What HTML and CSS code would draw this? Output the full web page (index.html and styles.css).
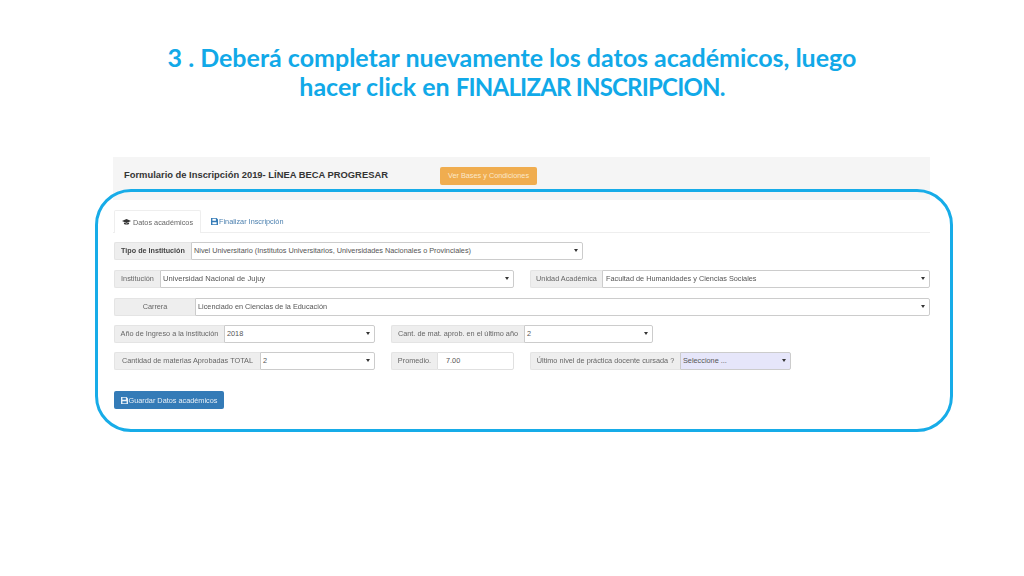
FILE: index.html
```html
<!DOCTYPE html>
<html lang="es">
<head>
<meta charset="utf-8">
<title>Formulario de Inscripción</title>
<link rel="stylesheet" href="styles.css">
</head>
<body>
<main class="slide">
  <h1 class="title">3 . Deberá completar nuevamente los datos académicos, luego<br>hacer click en <span class="caps">FINALIZAR INSCRIPCION.</span></h1>
  <section class="panel">
    <header class="head">
      <h2 class="head-title">Formulario de Inscripción 2019- LÍNEA BECA PROGRESAR</h2>
      <a class="btn-orange">Ver Bases y Condiciones</a>
    </header>
    <nav class="tabs">
      <a class="tab active">
        <svg class="ico" viewBox="0 0 12 10"><path fill="#333" d="M6 1 0 3.6l6 2.6 6-2.6z"/><path fill="#333" d="M2.6 5.6v1.9c1.8 1.2 5 1.2 6.8 0V5.6L6 7.1z"/></svg>Datos académicos
      </a>
      <a class="tab link">
        <svg class="ico save" viewBox="0 0 10 10"><path fill="#337ab7" d="M0 0h8l2 2v8H0zm2 1v3h5V1zm0 5v3h6V6z"/></svg>Finalizar Inscripción
      </a>
    </nav>
    <div class="row r1">
      <div class="group w469"><span class="addon strong w77">Tipo de Institución</span><div class="select"><span>Nivel Universitario (Institutos Universitarios, Universidades Nacionales o Provinciales)</span></div></div>
    </div>
    <div class="row r2">
      <div class="group w400"><span class="addon w46">Institución</span><div class="select wide"><span>Universidad Nacional de Jujuy</span></div></div>
      <div class="group w400b"><span class="addon w72">Unidad Académica</span><div class="select shift"><span>Facultad de Humanidades y Ciencias Sociales</span></div></div>
    </div>
    <div class="row r3">
      <div class="group grow"><span class="addon w81">Carrera</span><div class="select"><span>Licenciado en Ciencias de la Educación</span></div></div>
    </div>
    <div class="row r4">
      <div class="group w261"><span class="addon w110">Año de Ingreso a la institución</span><div class="select"><span>2018</span></div></div>
      <div class="group w262"><span class="addon w133">Cant. de mat. aprob. en el último año</span><div class="select"><span>2</span></div></div>
    </div>
    <div class="row r5">
      <div class="group w261"><span class="addon w146">Cantidad de materias Aprobadas TOTAL</span><div class="select"><span>2</span></div></div>
      <div class="group w122"><span class="addon w46">Promedio.</span><div class="input"><span>7.00</span></div></div>
      <div class="group w261c"><span class="addon w150">Último nivel de práctica docente cursada ?</span><div class="select lav"><span>Seleccione ...</span></div></div>
    </div>
    <a class="btn-blue">
      <svg class="ico save" viewBox="0 0 10 10"><path fill="#e8f0f7" d="M0 0h8l2 2v8H0zm2 1v3h5V1zm0 5v3h6V6z"/></svg>Guardar Datos académicos
    </a>
  </section>
  <div class="callout"></div>
</main>
</body>
</html>
```
FILE: styles.css
```css
* { box-sizing: border-box; }
html, body { margin: 0; padding: 0; background: #fff; }
.slide { position: relative; width: 1024px; height: 576px; overflow: hidden; font-family: "Liberation Sans", Arial, sans-serif; }
.title { margin: 0; padding-top: 43px; height: 157px; text-align: center; font: 700 25px/29px Lato, "Open Sans", sans-serif; color: #11a9e8; }
.caps { font-size: 24px; letter-spacing: -.8px; }
.panel { margin-left: 113px; width: 817px; color: #555; font-size: 7.3px; filter: blur(.3px); opacity: .995; will-change: opacity; }
.head { height: 43px; background: #f5f5f5; display: flex; align-items: flex-start; padding: 10px 0 0 11px; }
.head-title { margin: 0; width: 316px; font-size: 9.4px; line-height: 15px; font-weight: 700; color: #333; white-space: nowrap; }
.btn-orange { width: 97px; height: 18px; background: #f0ad4e; border-radius: 2px; color: #fbe8cc; line-height: 18px; text-align: center; font-size: 7.3px; }
.tabs { height: 33px; padding: 10px 0 0 1px; border-bottom: 1px solid #eee; display: flex; }
.tab { height: 23px; padding: 0 10px; display: flex; align-items: center; white-space: nowrap; }
.tab.active { width: 87px; padding: 0 0 0 7px; background: #fff; border: 1px solid #eee; border-bottom: 0; border-radius: 2px 2px 0 0; color: #666; }
.tab.link { color: #4a7fae; }
.ico { width: 9px; height: 8px; margin-right: 2px; flex: none; }
.ico.save { width: 7px; height: 7px; margin-right: 1px; }
.row { display: flex; padding-left: 1px; }
.r1 { margin-top: 9px; }
.r2 { margin-top: 10px; gap: 16px; }
.r3 { margin-top: 10px; }
.r4 { margin-top: 9px; gap: 16px; }
.r5 { margin-top: 9px; gap: 16px; }
.group { display: flex; height: 18px; }
.grow { flex: 1; }
.w469 { width: 469px; }
.w400 { width: 400px; }
.w400b { width: 400px; }
.w261 { width: 261px; }
.w262 { width: 262px; }
.w122 { width: 123px; }
.w261c { width: 261px; }
.addon { flex: none; background: #eee; border: 1px solid #e4e4e4; border-right: 0; border-radius: 2px 0 0 2px; text-align: center; line-height: 15px; white-space: nowrap; color: #666; font-size: 7.3px; }
.strong { font-weight: 700; color: #444; font-size: 7.2px; }
.w46 { width: 46px; }
.w72 { width: 72px; }
.w77 { width: 77px; }
.w81 { width: 81px; }
.w110 { width: 110px; }
.w133 { width: 133px; }
.w146 { width: 146px; }
.w150 { width: 150px; }
.select, .input { flex: 1; min-width: 0; background: #fff; border: 1px solid #ccc; border-radius: 0 2px 2px 0; padding-left: 2px; line-height: 16px; color: #555; white-space: nowrap; position: relative; font-size: 7.3px; }
.wide { font-size: 7.6px; }
.shift { padding-left: 3px; }
.select::after { content: ""; position: absolute; right: 4px; top: 6px; border: 2px solid transparent; border-top: 3px solid #333; border-bottom: 0; }
.input { padding-left: 8px; border-color: #e0e0e0; }
.lav { background: #e6e6fa; }
.btn-blue { display: flex; align-items: center; justify-content: center; width: 110px; height: 18px; margin: 21px 0 0 1px; background: #337ab7; border-radius: 2px; color: #e8f0f7; font-size: 7.3px; }
.callout { position: absolute; left: 95px; top: 189px; width: 858px; height: 243px; border: 3.5px solid #17ace8; border-radius: 36px; }
```
